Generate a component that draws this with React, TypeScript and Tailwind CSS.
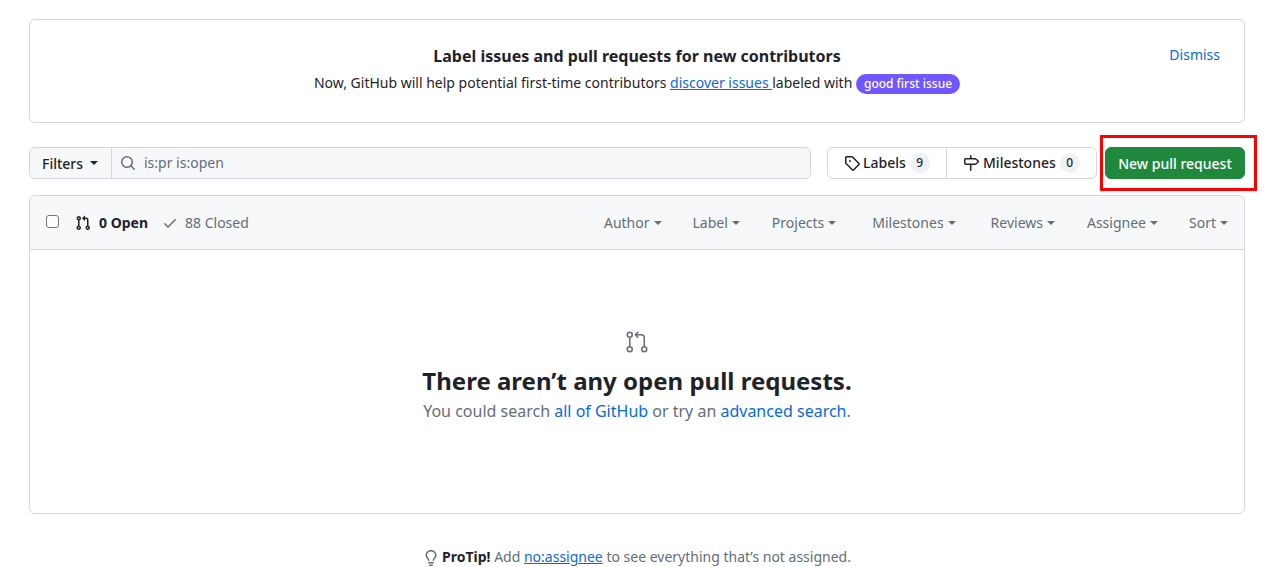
const PR16 = "M1.5 3.25a2.25 2.25 0 1 1 3 2.122v5.256a2.251 2.251 0 1 1-1.5 0V5.372A2.25 2.25 0 0 1 1.5 3.25Zm5.677-.177L9.573.677A.25.25 0 0 1 10 .854V2.5h1A2.5 2.5 0 0 1 13.5 5v5.628a2.251 2.251 0 1 1-1.5 0V5a1 1 0 0 0-1-1h-1v1.646a.25.25 0 0 1-.427.177L7.177 3.427a.25.25 0 0 1 0-.354ZM3.75 2.5a.75.75 0 1 0 0 1.5.75.75 0 0 0 0-1.5Zm0 9.5a.75.75 0 1 0 0 1.5.75.75 0 0 0 0-1.5Zm8.25.75a.75.75 0 1 0 1.5 0 .75.75 0 0 0-1.5 0Z";
const PR24 = "M16 19.25a3.25 3.25 0 1 1 6.5 0 3.25 3.25 0 0 1-6.5 0Zm-14.5 0a3.25 3.25 0 1 1 6.5 0 3.25 3.25 0 0 1-6.5 0Zm0-14.5a3.25 3.25 0 1 1 6.5 0 3.25 3.25 0 0 1-6.5 0ZM4.75 3a1.75 1.75 0 1 0 .001 3.501A1.75 1.75 0 0 0 4.75 3Zm0 14.5a1.75 1.75 0 1 0 .001 3.501A1.75 1.75 0 0 0 4.75 17.5Zm14.5 0a1.75 1.75 0 1 0 .001 3.501 1.75 1.75 0 0 0-.001-3.501Z M13.405 1.72a.75.75 0 0 1 0 1.06L12.185 4h4.065A3.75 3.75 0 0 1 20 7.75v8.75a.75.75 0 0 1-1.5 0V7.75a2.25 2.25 0 0 0-2.25-2.25h-4.064l1.22 1.22a.75.75 0 0 1-1.061 1.06l-2.5-2.5a.75.75 0 0 1 0-1.06l2.5-2.5a.75.75 0 0 1 1.06 0ZM4.75 7.25A.75.75 0 0 1 5.5 8v8A.75.75 0 0 1 4 16V8a.75.75 0 0 1 .75-.75Z";
const CHECK = "M13.78 4.22a.75.75 0 0 1 0 1.06l-7.25 7.25a.75.75 0 0 1-1.06 0L2.22 9.28a.751.751 0 0 1 .018-1.042.751.751 0 0 1 1.042-.018L6 10.94l6.72-6.72a.75.75 0 0 1 1.06 0Z";
const SEARCH = "M10.68 11.74a6 6 0 0 1-7.922-8.982 6 6 0 0 1 8.982 7.922l3.04 3.04a.749.749 0 0 1-.326 1.275.749.749 0 0 1-.734-.215ZM11.5 7a4.499 4.499 0 1 0-8.997 0A4.499 4.499 0 0 0 11.5 7Z";
const TAG = "M1 7.775V2.75C1 1.784 1.784 1 2.75 1h5.025c.464 0 .91.184 1.238.513l6.25 6.25a1.75 1.75 0 0 1 0 2.474l-5.026 5.026a1.75 1.75 0 0 1-2.474 0l-6.25-6.25A1.752 1.752 0 0 1 1 7.775Zm1.5 0c0 .066.026.13.073.177l6.25 6.25a.25.25 0 0 0 .354 0l5.025-5.025a.25.25 0 0 0 0-.354l-6.25-6.25a.25.25 0 0 0-.177-.073H2.75a.25.25 0 0 0-.25.25ZM6 5a1 1 0 1 1 0 2 1 1 0 0 1 0-2Z";
const MILESTONE = "M7.75 0a.75.75 0 0 1 .75.75V3h3.634c.414 0 .814.147 1.13.414l2.07 1.75a1.75 1.75 0 0 1 0 2.672l-2.07 1.75a1.75 1.75 0 0 1-1.13.414H8.5v5.25a.75.75 0 0 1-1.5 0V10H2.75A1.75 1.75 0 0 1 1 8.25v-3.5C1 3.784 1.784 3 2.75 3H7V.75A.75.75 0 0 1 7.75 0Zm4.384 8.5a.25.25 0 0 0 .161-.06l2.07-1.75a.248.248 0 0 0 0-.38l-2.07-1.75a.25.25 0 0 0-.161-.06H2.75a.25.25 0 0 0-.25.25v3.5c0 .138.112.25.25.25h9.384Z";
const BULB = "M8 1.5c-2.363 0-4 1.69-4 3.75 0 .984.424 1.625.984 2.304l.214.253c.223.264.47.556.673.848.284.411.537.896.621 1.49a.75.75 0 0 1-1.484.211c-.04-.282-.163-.547-.37-.847a8.456 8.456 0 0 0-.542-.68c-.084-.1-.173-.205-.268-.32C3.201 7.75 2.5 6.766 2.5 5.25 2.5 2.31 4.863 0 8 0s5.5 2.31 5.5 5.25c0 1.516-.701 2.5-1.328 3.259-.095.115-.184.22-.268.319-.207.245-.383.453-.541.681-.208.3-.33.565-.37.847a.751.751 0 0 1-1.485-.212c.084-.593.337-1.078.621-1.489.203-.292.45-.584.673-.848.075-.088.147-.173.213-.253.561-.679.985-1.32.985-2.304 0-2.06-1.637-3.75-4-3.75ZM5.75 12h4.5a.75.75 0 0 1 0 1.5h-4.5a.75.75 0 0 1 0-1.5ZM6 15.25a.75.75 0 0 1 .75-.75h2.5a.75.75 0 0 1 0 1.5h-2.5a.75.75 0 0 1-.75-.75Z";

function Icon({ d, size = 16, className = '' }: { d: string; size?: number; className?: string }) {
  return (
    <svg width={size} height={size} viewBox={`0 0 ${size} ${size}`} fill="currentColor" className={`shrink-0 ${className}`}>
      <path d={d} />
    </svg>
  );
}

function Caret({ className = 'ml-1' }: { className?: string }) {
  return <span className={`inline-block w-0 h-0 border-x-4 border-x-transparent border-t-4 border-t-current ${className}`} />;
}

const filters = [
  { name: 'Author', w: 'mr-[31px]' },
  { name: 'Label', w: 'mr-8' },
  { name: 'Projects', w: 'mr-9' },
  { name: 'Milestones', w: 'mr-[35px]' },
  { name: 'Reviews', w: 'mr-8' },
  { name: 'Assignee', w: 'mr-[31px]' },
  { name: 'Sort', w: '' },
];

export default function App() {
  return (
    <div className="relative h-[567px] overflow-hidden bg-white pl-[29px] pr-[35px] pt-[19px] font-['Noto_Sans',sans-serif] text-sm leading-[21px] text-[#1f2328]">
      <div className="relative h-[104px] rounded-md border border-[#d0d7de] pt-6 text-center">
        <a className="absolute right-6 top-[24px] text-[#0969da]">Dismiss</a>
        <h2 className="text-base font-bold leading-6">Label issues and pull requests for new contributors</h2>
        <p className="mt-1">
          Now, GitHub will help potential first-time contributors{' '}
          <a className="text-[#0969da] underline">discover issues </a>
          labeled with{' '}
          <span className="inline-block rounded-full bg-[#7057ff] px-2 text-xs font-medium leading-[20px] text-white">good first issue</span>
        </p>
      </div>

      <div className="mt-6 flex h-8">
        <div className="flex w-[782px] rounded-md border border-[#d0d7de] bg-[#f6f8fa]">
          <button className="flex w-[82px] items-center border-r border-[#d0d7de] pl-3 font-medium">
            Filters
            <Caret className="ml-[7px]" />
          </button>
          <div className="flex flex-1 items-center pl-2 text-[#656d76]">
            <Icon d={SEARCH} />
            <span className="ml-2 -translate-y-px">is:pr is:open</span>
          </div>
        </div>
        <div className="ml-4 flex w-[270px] rounded-md border border-[#d0d7de] font-medium">
          <div className="flex w-[119px] items-center border-r border-[#d0d7de] pl-4">
            <Icon d={TAG} />
            <span className="ml-[3px] -translate-y-px">Labels</span>
            <span className="ml-1 h-5 w-5 rounded-full bg-[#eff2f5] text-center text-xs font-medium leading-5">9</span>
          </div>
          <div className="flex flex-1 items-center pl-4">
            <Icon d={MILESTONE} />
            <span className="ml-[4px] -translate-y-px">Milestones</span>
            <span className="ml-[4px] h-5 w-5 rounded-full bg-[#eff2f5] text-center text-xs font-medium leading-5">0</span>
          </div>
        </div>
        <button className="ml-2 h-8 w-[140px] rounded-md border border-[#1f883d] bg-[#1f883d] font-medium text-white">New pull request</button>
      </div>

      <div className="mt-4 h-[319px] rounded-md border border-[#d0d7de]">
        <div className="flex h-[54px] items-center rounded-t-md border-b border-[#d0d7de] bg-[#f6f8fa] pl-4 pr-4">
          <span className="-mt-[3px] h-[13px] w-[13px] rounded-[3px] border border-[#767676] bg-white" />
          <Icon d={PR16} className="ml-[16px]" />
          <span className="ml-2 font-bold">0 Open</span>
          <Icon d={CHECK} className="ml-[14px] text-[#656d76]" />
          <span className="ml-[7px] text-[#656d76]">88 Closed</span>
          <div className="ml-auto flex items-center text-[#656d76]">
            {filters.map(f => (
              <span key={f.name} className={`flex items-center ${f.w}`}>
                {f.name}
                <Caret />
              </span>
            ))}
          </div>
        </div>
        <div className="flex flex-col items-center pt-[80px]">
          <Icon d={PR24} size={24} className="text-[#656d76]" />
          <h3 className="mt-[9px] text-2xl font-bold leading-[36px]">There aren’t any open pull requests.</h3>
          <p className="text-base leading-6 text-[#656d76]">
            You could search <a className="text-[#0969da]">all of GitHub</a> or try an <a className="text-[#0969da]">advanced search</a>.
          </p>
        </div>
      </div>

      <div className="mt-[32px] flex items-center justify-center text-[#656d76]">
        <Icon d={BULB} className="mr-[3px] translate-y-[1px]" />
        <span>
          <strong className="font-bold text-[#1f2328]">ProTip!</strong> Add <a className="text-[#0969da] underline">no:assignee</a> to see everything that’s not assigned.
        </span>
      </div>

      {/* red annotation around the button */}
      <div className="absolute left-[1100px] top-[135px] h-[56px] w-[157px] border-[3px] border-[#ff0000]" />
    </div>
  );
}
